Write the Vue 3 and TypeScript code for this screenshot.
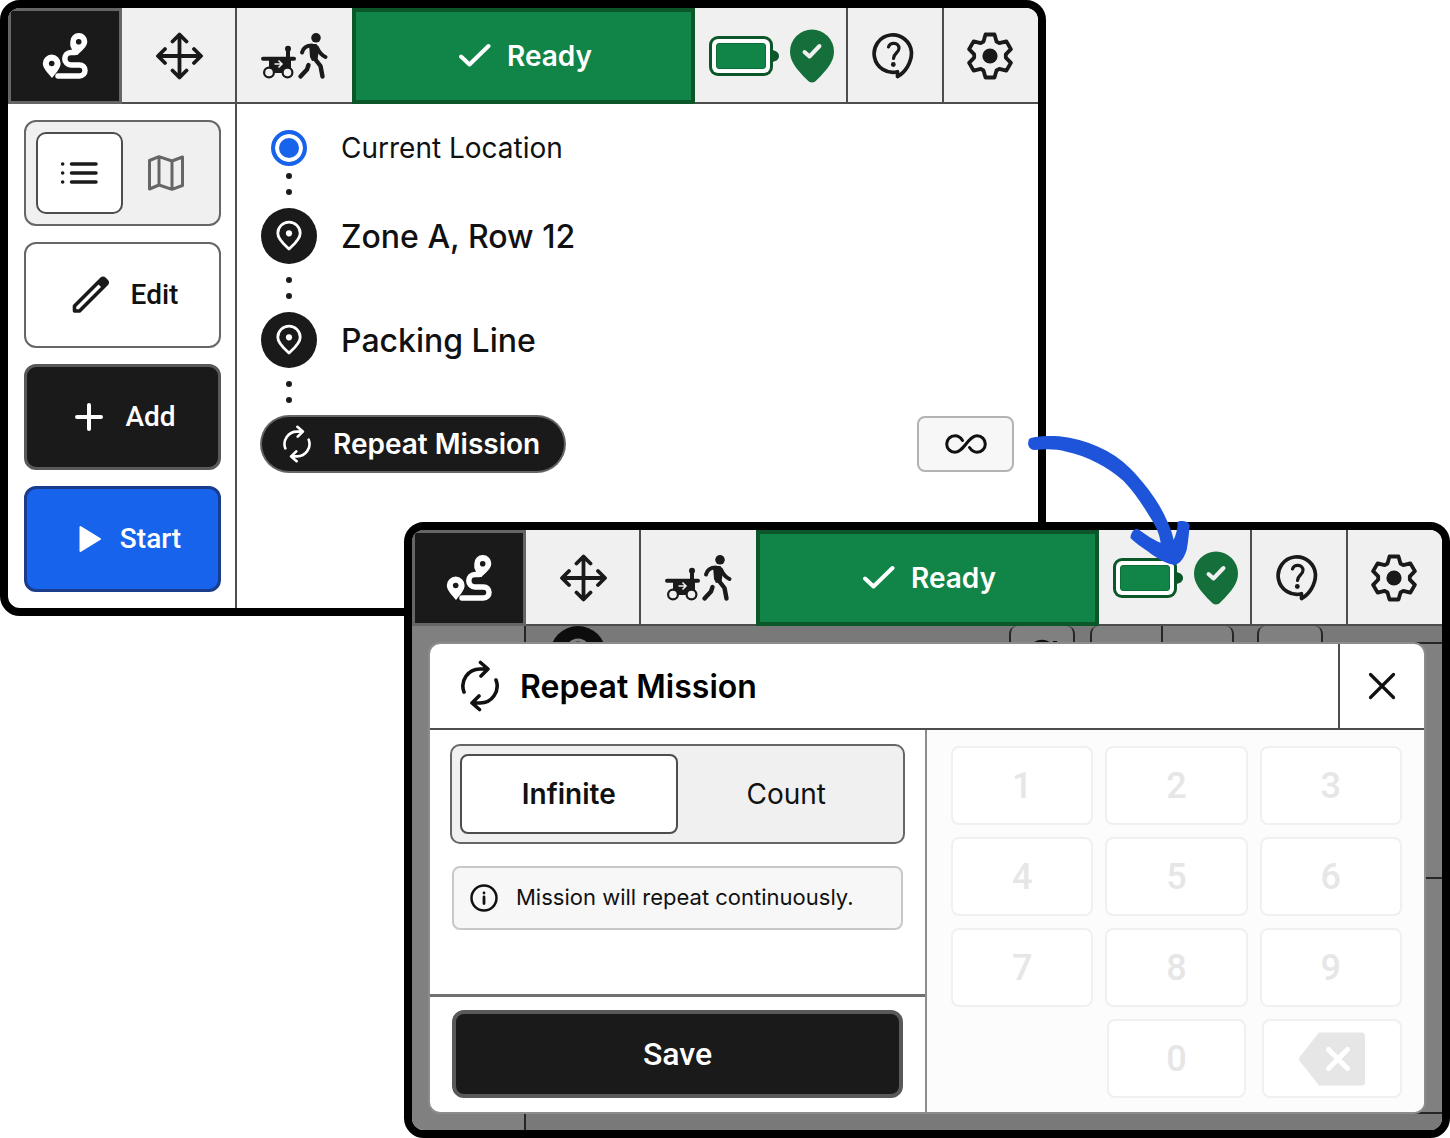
<script setup lang="ts">
import { ref } from 'vue'

type ScreenName = 'mission' | 'repeat'

const screens: ScreenName[] = ['mission', 'repeat']
const view = ref<'list' | 'map'>('list')
const repeatMode = ref<'infinite' | 'count'>('infinite')
const stops = ['Zone A, Row 12', 'Packing Line']
const digits = [1, 2, 3, 4, 5, 6, 7, 8, 9]

// Six-tooth gear outline: one tooth profile rotated in 60 degree steps.
const tooth: [number, number][] = [[-6.5, -14.5], [-4.5, -21.5], [4.5, -21.5], [6.5, -14.5]]
const gearPoints = Array.from({ length: 6 }, (_, i) => {
  const a = (i * Math.PI) / 3
  return tooth
    .map(([x, y]) => `${(24 + x * Math.cos(a) - y * Math.sin(a)).toFixed(2)},${(24 + x * Math.sin(a) + y * Math.cos(a)).toFixed(2)}`)
    .join(' ')
}).join(' ')
</script>

<template>
  <svg class="sprite" aria-hidden="true">
    <symbol id="i-route" viewBox="0 0 48 48">
      <path d="M34 20.500H30a6.200 6.200 0 0 0 0 12.400H38.500a5.500 5.500 0 0 1 0 11H17" fill="none" stroke="#fff" stroke-width="5.500" stroke-linecap="round" />
      <path d="M33.500 23L29.300 14V9.500a8.500 8.500 0 0 1 17 0C46.300 15 40 19 36.500 23Z" fill="#fff" />
      <path d="M11 46C8 42 1.800 36.500 1.800 31.500a8.900 8.900 0 0 1 17.800 0C19.600 36.500 14 42 11 46Z" fill="#fff" />
      <circle cx="37.700" cy="9.700" r="2.800" fill="#1a1a1a" />
      <circle cx="10.700" cy="31.500" r="2.800" fill="#1a1a1a" />
    </symbol>
    <symbol id="i-move" viewBox="0 0 48 48">
      <path d="M24.500 3V45M3.500 24H45.500M17.500 9.500L24.500 2.500l7 7M17.500 38.500l7 7 7-7M10 17L3 24l7 7M39 17l7 7-7 7" fill="none" stroke="#1a1a1a" stroke-width="3.800" stroke-linecap="round" stroke-linejoin="round" />
    </symbol>
    <symbol id="i-follow" viewBox="1 0 68 48">
      <g fill="none" stroke="#1a1a1a" stroke-linecap="round" stroke-linejoin="round">
        <path d="M3 26.700H34" stroke-width="4" />
        <path d="M28 17V26" stroke-width="4" />
        <path d="M42 20.500C43 16.500 46 13.500 52 13.500" stroke-width="4" />
        <path d="M57 15.500C59 20 61 23 65.500 25" stroke-width="4" />
        <path d="M55 27L60.500 34L62.500 44.500" stroke-width="4.400" />
        <path d="M48.500 33L47 37.500L40.500 44.500" stroke-width="4.400" />
      </g>
      <path d="M49 12H56.500L59 17L57.500 28L52 29L50 25Z" fill="#1a1a1a" />
      <path d="M9 28H31V41H9Z" fill="#1a1a1a" />
      <circle cx="28" cy="16.700" r="3" fill="#1a1a1a" />
      <circle cx="56" cy="5.800" r="4.800" fill="#1a1a1a" />
      <circle cx="9" cy="40.500" r="4.900" fill="#f0f0f0" stroke="#1a1a1a" stroke-width="2.200" />
      <circle cx="27.500" cy="40.500" r="4.900" fill="#f0f0f0" stroke="#1a1a1a" stroke-width="2.200" />
      <path d="M14.500 32h7.500M18.500 28.500l3.500 3.500-3.500 3.500" fill="none" stroke="#f0f0f0" stroke-width="1.600" />
    </symbol>
    <symbol id="i-check" viewBox="0 0 32 32">
      <path d="M2 16.500L10.500 24.500L29.500 6" fill="none" stroke="#fff" stroke-width="4" stroke-linecap="round" stroke-linejoin="round" />
    </symbol>
    <symbol id="i-battery" viewBox="0 0 70 40">
      <path d="M63 14C67 14.500 70 16.500 70 20S67 25.500 63 26Z" fill="#0b5729" />
      <rect width="64" height="40" rx="9" fill="#0b5729" />
      <rect x="3" y="3" width="58" height="34" rx="6" fill="#fff" />
      <rect x="7.500" y="7.500" width="49" height="25" rx="2.500" fill="#118547" stroke="#0b6f37" stroke-width="1" />
    </symbol>
    <symbol id="i-located" viewBox="0 0 44 54">
      <path d="M22 53.500c-2 0-3-1-4.500-2.300C6 40 0 32 0 22.500A22 22 0 0 1 44 22.500C44 32 38 40 26.500 51.200C25 52.500 24 53.500 22 53.500Z" fill="#156f3b" />
      <path d="M14.500 23L19.500 27.500L29.500 17" fill="none" stroke="#f0f0f0" stroke-width="4" stroke-linecap="round" stroke-linejoin="round" />
    </symbol>
    <symbol id="i-help" viewBox="2 0 48 48">
      <path d="M28.500 39.700A18.700 18.700 0 1 1 42.500 20.500C42.500 31 36 40.500 28.500 44.500Z" fill="none" stroke="#1a1a1a" stroke-width="3.700" stroke-linejoin="round" />
      <path d="M19.500 15C20.500 9.800 30 10 30 16.300C30 21 24.500 21 24.500 26.500" fill="none" stroke="#1a1a1a" stroke-width="3.200" stroke-linecap="round" />
      <circle cx="24.300" cy="32.500" r="2.400" fill="#1a1a1a" />
    </symbol>
    <symbol id="i-gear" viewBox="1 0 48 48">
      <polygon :points="gearPoints" fill="none" stroke="#1a1a1a" stroke-width="3.800" stroke-linejoin="round" />
      <circle cx="24" cy="24" r="7.600" fill="#1a1a1a" />
    </symbol>
    <symbol id="i-repeat" viewBox="0 0 40 52">
      <path d="M4 32A17 17 0 0 1 20 9H28M20.500 2.500L28 9L21 16M36 20A17 17 0 0 1 20 43H12M19.500 49.500L12 43L19 36" fill="none" stroke="currentColor" stroke-width="3.600" stroke-linecap="round" stroke-linejoin="round" />
    </symbol>
    <symbol id="i-pin" viewBox="0 0 28 32">
      <path d="M14 29C12 27 2.800 20 2.800 13.300A11.200 11.200 0 0 1 25.200 13.300C25.200 20 16 27 14 29Z" fill="none" stroke="#fff" stroke-width="2.800" stroke-linejoin="round" />
      <circle cx="14" cy="13.300" r="3.100" fill="#fff" />
    </symbol>
  </svg>

  <main class="stage">
    <section v-for="screen in screens" :key="screen" class="device" :class="screen">
      <header class="topbar">
        <button class="tab active" type="button" aria-label="Missions"><svg width="48" height="48"><use href="#i-route" /></svg></button>
        <button class="tab lined" type="button" aria-label="Drive"><svg width="48" height="48"><use href="#i-move" /></svg></button>
        <button class="tab" type="button" aria-label="Follow me"><svg width="68" height="48"><use href="#i-follow" /></svg></button>
        <div class="status" role="status">
          <svg width="32" height="32" aria-hidden="true"><use href="#i-check" /></svg>
          <span>Ready</span>
        </div>
        <div class="health lined">
          <svg width="70" height="40" role="img" aria-label="Battery full"><use href="#i-battery" /></svg>
          <svg width="44" height="54" role="img" aria-label="Localized"><use href="#i-located" /></svg>
        </div>
        <button class="tab help lined" type="button" aria-label="Help"><svg width="48" height="48"><use href="#i-help" /></svg></button>
        <button class="tab gear" type="button" aria-label="Settings"><svg width="48" height="48"><use href="#i-gear" /></svg></button>
      </header>

      <div v-if="screen === 'mission'" class="body">
        <nav class="sidebar">
          <div class="switch">
            <button type="button" aria-label="List view" :class="{ on: view === 'list' }" @click="view = 'list'">
              <svg width="40" height="24" viewBox="0 0 40 24">
                <path d="M12.500 3H37M12.500 12H37M12.500 21H37M3.600 3h.1M3.600 12h.1M3.600 21h.1" stroke="#1a1a1a" stroke-width="3.500" stroke-linecap="round" />
              </svg>
            </button>
            <button type="button" aria-label="Map view" :class="{ on: view === 'map' }" @click="view = 'map'">
              <svg width="40" height="40" viewBox="0 0 40 40">
                <path d="M3.500 7.500L13 3.700L26 8L36.500 4V32.500L26 36.300L13 32L3.500 36ZM13 3.700V32M26 8V36.300" fill="none" stroke="#666" stroke-width="3" stroke-linejoin="round" />
              </svg>
            </button>
          </div>
          <button class="action" type="button">
            <svg width="48" height="48" viewBox="0 0 48 48">
              <path d="M7.500 40V35L34.500 8Q36 6.500 37.500 8L39.500 10Q41 11.500 39.500 13L12.500 40Z" fill="none" stroke="#1a1a1a" stroke-width="3.600" stroke-linejoin="round" />
              <path d="M30 12L35 7.500H38L40 10V13L35.500 17.500Z" fill="#1a1a1a" />
            </svg>
            Edit
          </button>
          <button class="action dark" type="button">
            <svg width="40" height="40" viewBox="0 0 40 40"><path d="M20 8V32M8 20H32" stroke="#fff" stroke-width="4" stroke-linecap="round" /></svg>
            Add
          </button>
          <button class="action blue" type="button">
            <svg width="40" height="40" viewBox="0 0 40 40"><path d="M16.500 8V32L36 20Z" fill="#fff" stroke="#fff" stroke-width="2" stroke-linejoin="round" /></svg>
            Start
          </button>
        </nav>

        <div class="plan">
          <div class="stop current">
            <span class="marker"><i class="ring"></i></span>
            <span>Current Location</span>
          </div>
          <template v-for="(stop, i) in stops" :key="stop">
            <div class="link" :class="{ first: i === 0 }"><i></i><i></i></div>
            <div class="stop">
              <span class="marker disc"><svg width="28" height="32" aria-hidden="true"><use href="#i-pin" /></svg></span>
              <span class="place">{{ stop }}</span>
            </div>
          </template>
          <div class="link"><i></i><i></i></div>
          <div class="repeat-row">
            <span class="pill">
              <svg width="32" height="38" aria-hidden="true"><use href="#i-repeat" /></svg>
              Repeat Mission
            </span>
            <button class="infinity" type="button" aria-label="Repeat count">
              <svg width="44" height="22" viewBox="0 0 44 22">
                <path d="M18.500 7.500C16.500 4 14 2.700 11 2.700A8.300 8.300 0 0 0 11 19.300C20 19.300 24 2.700 33 2.700A8.300 8.300 0 0 1 33 19.300C30 19.300 27.500 17.500 25.500 14.500" fill="none" stroke="#111" stroke-width="3" stroke-linecap="round" />
              </svg>
            </button>
          </div>
        </div>
      </div>

      <div v-else class="body dimmed">
        <div class="behind" aria-hidden="true">
          <div class="behind-side"></div>
          <div class="behind-main">
            <div class="behind-row">
              <svg class="behind-pin" width="56" height="56" viewBox="0 0 56 56">
                <circle cx="28" cy="28" r="28" fill="#0d0d0d" />
                <circle cx="28" cy="25" r="11" fill="none" stroke="#808080" stroke-width="3" />
              </svg>
              <span class="ghost"><svg width="36" height="36" viewBox="0 0 36 36"><path d="M5 16A13 13 0 0 1 29 10M31 3V11" fill="none" stroke="#0d0d0d" stroke-width="4" /></svg></span>
              <span class="ghost wide"></span>
              <span class="ghost"></span>
            </div>
            <div class="behind-line"></div>
            <div class="behind-line"></div>
          </div>
        </div>

        <div class="dialog" role="dialog" aria-labelledby="repeat-title">
          <div class="dialog-head">
            <svg width="40" height="52" aria-hidden="true"><use href="#i-repeat" /></svg>
            <h2 id="repeat-title">Repeat Mission</h2>
            <button class="close" type="button" aria-label="Close">
              <svg width="32" height="32" viewBox="0 0 32 32"><path d="M4.500 4.500L27.500 27.500M27.500 4.500L4.500 27.500" stroke="#111" stroke-width="3.200" stroke-linecap="round" /></svg>
            </button>
          </div>
          <div class="dialog-body">
            <div class="options">
              <div class="settings">
                <div class="switch modes">
                  <button type="button" :class="{ on: repeatMode === 'infinite' }" @click="repeatMode = 'infinite'">Infinite</button>
                  <button type="button" :class="{ on: repeatMode === 'count' }" @click="repeatMode = 'count'">Count</button>
                </div>
                <p class="note">
                  <svg width="28" height="28" viewBox="0 0 28 28" aria-hidden="true">
                    <circle cx="14" cy="14" r="12.500" fill="none" stroke="#111" stroke-width="2.500" />
                    <path d="M14 13V19.500M14 8.900v.1" stroke="#111" stroke-width="2.800" stroke-linecap="round" />
                  </svg>
                  <span>Mission will repeat continuously.</span>
                </p>
              </div>
              <div class="footer"><button class="save" type="button">Save</button></div>
            </div>
            <div class="keypad">
              <button v-for="d in digits" :key="d" type="button" disabled>{{ d }}</button>
              <button class="zero" type="button" disabled>0</button>
              <button class="erase" type="button" disabled aria-label="Backspace">
                <svg width="66" height="54" viewBox="0 0 66 54">
                  <path d="M20 .500H62.500Q66 .500 66 4V50Q66 53.500 62.500 53.500H20L1 29.500Q-1 27 1 24.500Z" fill="#e6e6e6" />
                  <path d="M29.500 17.500L48.500 36.500M48.500 17.500L29.500 36.500" stroke="#fff" stroke-width="5" stroke-linecap="round" />
                </svg>
              </button>
            </div>
          </div>
        </div>
      </div>
    </section>

    <svg class="pointer" width="162" height="130" viewBox="384 105 486 390" aria-hidden="true">
      <path fill="#1d54d9" d="M386 120Q388 114 402 112C430 107 460 108 478 109C560 118 636 151 690 205C738 253 782 316 800 360C812 385 818 405 821 420C830 400 834 380 832 366Q836 362 848 363Q868 365 869 376C866 410 864 430 860 450C850 480 838 494 820 494C805 493 770 475 745 455C725 442 705 428 692 415Q690 408 697 395Q703 386 712 386C740 405 760 420 782 428C778 400 770 385 757 362C732 322 706 278 670 242C620 198 565 170 500 155C470 147 440 146 405 150Q388 150 384 132Z" />
    </svg>
  </main>
</template>

<style>
body {
  margin: 0;
  background: #fff;
}
</style>

<style scoped>
* {
  box-sizing: border-box;
}

.sprite {
  position: absolute;
  width: 0;
  height: 0;
}

.stage {
  position: relative;
  display: grid;
  grid-template-columns: 404fr 642fr 404fr;
  grid-template-rows: minmax(522px, auto) 94px minmax(522px, auto);
  font-family: Inter, "Liberation Sans", sans-serif;
  font-size: 28px;
  line-height: 36px;
  color: #111;
}

button {
  display: flex;
  align-items: center;
  justify-content: center;
  margin: 0;
  padding: 0;
  border: 0;
  background: none;
  font: inherit;
  color: inherit;
}

svg {
  display: block;
  flex: none;
}

.device {
  display: flex;
  flex-direction: column;
  min-width: 0;
  overflow: hidden;
  border: 8px solid #000;
  border-radius: 20px;
  background: #fff;
}

.mission {
  grid-area: 1 / 1 / 3 / 3;
}

.repeat {
  grid-area: 2 / 2 / 4 / 4;
}

.pointer {
  position: absolute;
  top: 435px;
  left: 70.9%;
}

/* Top bar */
.topbar {
  display: flex;
  flex: none;
  height: 96px;
  background: #f0f0f0;
  box-shadow: inset 0 -2px #4d4d4d;
}

.tab {
  width: 115px;
}

.tab.help {
  width: 96px;
}

.tab.gear {
  width: 94px;
}

.tab.active {
  width: 114px;
  border: 3px solid #666;
  background: #1a1a1a;
}

.lined {
  border-right: 2px solid #4d4d4d;
}

.status {
  display: flex;
  flex: 1;
  align-items: center;
  justify-content: center;
  gap: 16px;
  padding-left: 4px;
  border: 4px solid #0b5729;
  background: #118547;
  color: #fff;
  font-weight: 600;
}

.health {
  display: flex;
  align-items: center;
  justify-content: center;
  gap: 11px;
  width: 153px;
  padding-left: 2px;
}

.body {
  display: flex;
  flex: 1;
}

/* Sidebar */
.sidebar {
  display: grid;
  flex: none;
  grid-template-rows: repeat(4, 1fr);
  gap: 16px;
  width: 229px;
  padding: 16px 14px 16px 16px;
  border-right: 2px solid #4d4d4d;
}

.switch {
  display: grid;
  grid-template-columns: 1fr 1fr;
  padding: 10px;
  border: 2px solid #666;
  border-radius: 12px;
  background: #f0f0f0;
}

.switch button {
  border: 2px solid transparent;
  border-radius: 10px;
}

.switch .on {
  border-color: #4d4d4d;
  background: #fff;
  font-weight: 600;
}

.action {
  gap: 16px;
  border: 2px solid #666;
  border-radius: 12px;
  background: #fff;
  font-family: Roboto, "Liberation Sans", sans-serif;
  font-weight: 500;
}

.action.dark {
  border: 3px solid #595959;
  background: #1a1a1a;
  color: #fff;
}

.action.blue {
  border: 3px solid #193c8c;
  background: #1763ec;
  color: #fff;
}

/* Mission plan */
.plan {
  flex: 1;
  padding: 26px 24px;
}

.stop {
  display: flex;
  align-items: center;
  gap: 24px;
  font-size: 32px;
  font-weight: 500;
}

.stop.current {
  font-size: 28px;
  font-weight: 400;
}

.place {
  padding-top: 2px;
}

.marker {
  display: flex;
  align-items: center;
  justify-content: center;
  width: 56px;
}

.disc {
  height: 56px;
  border-radius: 50%;
  background: #1a1a1a;
}

.ring {
  width: 36px;
  height: 36px;
  border: 4px solid #1763ec;
  border-radius: 50%;
  background: #1763ec;
  box-shadow: inset 0 0 0 4px #fff;
}

.link {
  display: flex;
  flex-direction: column;
  align-items: center;
  justify-content: flex-end;
  gap: 10px;
  width: 56px;
  height: 48px;
  padding-bottom: 13px;
}

.link.first {
  height: 42px;
}

.link i {
  width: 6px;
  height: 6px;
  border-radius: 50%;
  background: #1a1a1a;
}

.repeat-row {
  display: flex;
  align-items: center;
  justify-content: space-between;
}

.pill {
  display: flex;
  align-items: center;
  gap: 20px;
  height: 56px;
  padding: 0 24px 0 19px;
  border: 1px solid #666;
  border-radius: 29px;
  background: #1a1a1a;
  box-shadow: 0 0 0 1px #666;
  color: #fff;
  font-weight: 600;
}

.infinity {
  width: 97px;
  height: 56px;
  border: 2px solid #b3b3b3;
  border-radius: 8px;
  background: #f7f7f7;
}

/* Dimmed screen under the dialog */
.dimmed {
  display: grid;
  background: #808080;
}

.behind,
.dialog {
  grid-area: 1 / 1;
}

.behind {
  display: flex;
}

.behind-side {
  width: 114px;
  border-right: 2px solid #262626;
}

.behind-main {
  display: flex;
  flex: 1;
  flex-direction: column;
  padding-bottom: 16px;
  background: #797979;
}

.behind-row {
  display: flex;
  gap: 15px;
  height: 18px;
  padding: 0 119px 0 24px;
  overflow: hidden;
  border-bottom: 2px solid #262626;
}

.behind-pin {
  margin-right: auto;
}

.ghost {
  display: flex;
  justify-content: center;
  width: 66px;
  height: 66px;
  padding-top: 12px;
  border: solid #262626;
  border-width: 0 2px;
  border-radius: 8px;
  background: #808080;
}

.ghost.wide {
  width: 144px;
  margin-right: 8px;
  background: linear-gradient(#262626, #262626) center / 2px 100% no-repeat #808080;
}

.behind-line {
  flex: 1;
  border-bottom: 2px solid #262626;
  background: #808080;
}

/* Dialog */
.dialog {
  display: flex;
  flex-direction: column;
  margin: 16px;
  overflow: hidden;
  border: 2px solid #8c8c8c;
  border-radius: 12px;
  background: #fff;
}

.dialog-head {
  display: flex;
  align-items: center;
  height: 86px;
  padding-left: 30px;
  border-bottom: 2px solid #4d4d4d;
}

h2 {
  flex: 1;
  margin: 0;
  padding: 2px 0 0 20px;
  font-size: 32px;
  font-weight: 600;
  line-height: 40px;
  color: #000;
}

.close {
  align-self: stretch;
  width: 86px;
  border-left: 2px solid #4d4d4d;
}

.dialog-body {
  display: grid;
  flex: 1;
  grid-template-columns: 1fr 1fr;
}

.options {
  display: flex;
  flex-direction: column;
  border-right: 2px solid #8c8c8c;
}

.settings {
  display: flex;
  flex: 1;
  flex-direction: column;
  gap: 22px;
  padding: 14px 20px;
}

.modes {
  height: 100px;
  padding: 8px;
  border-radius: 10px;
}

.modes button {
  border-radius: 8px;
}

.note {
  display: flex;
  align-items: center;
  gap: 18px;
  height: 64px;
  margin: 0 2px;
  padding: 0 16px;
  border: 2px solid #c8c8c8;
  border-radius: 8px;
  background: #f7f7f7;
  font-size: 22px;
  line-height: 28px;
}

.note span {
  padding-bottom: 3px;
}

.footer {
  padding: 13px 22px 14px;
  border-top: 3px solid #707070;
}

.save {
  width: 100%;
  height: 88px;
  border: 4px solid #595959;
  border-radius: 12px;
  background: #1a1a1a;
  color: #fff;
  font-family: Roboto, "Liberation Sans", sans-serif;
  font-size: 32px;
  font-weight: 500;
}

.keypad {
  display: grid;
  grid-template-columns: repeat(3, 1fr);
  grid-template-rows: repeat(4, 1fr);
  gap: 12px;
  padding: 16px 22px 14px 24px;
  background: #fcfcfc;
}

.keypad button {
  border: 2px solid #f0f0f0;
  border-radius: 8px;
  background: #fff;
  color: #e6e6e6;
  font-family: Roboto, "Liberation Sans", sans-serif;
  font-size: 36px;
  font-weight: 500;
}

.keypad .zero {
  grid-column: 2;
  margin: 0 2px;
}

.keypad .erase {
  margin-left: 2px;
}
</style>
